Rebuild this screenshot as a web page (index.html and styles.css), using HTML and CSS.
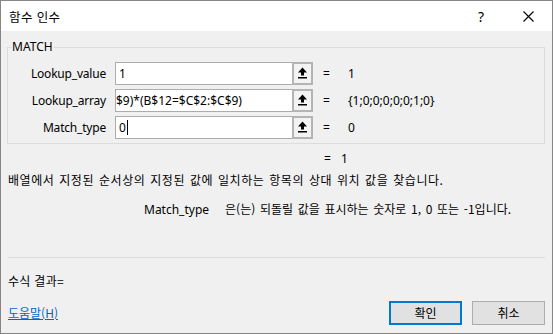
FILE: index.html
```html
<!DOCTYPE html>
<html lang="ko">
<head>
<meta charset="utf-8">
<title>함수 인수</title>
<link rel="stylesheet" href="styles.css">
</head>
<body>
<div class="window">
  <div class="titlebar">
    <span class="title">함수 인수</span>
    <span class="help">?</span>
    <span class="close">
      <svg width="11" height="11" viewBox="0 0 11 11"><path d="M0.5 0.5 L10.5 10.5 M10.5 0.5 L0.5 10.5" stroke="#000" stroke-width="1.1" fill="none"/></svg>
    </span>
  </div>
  <div class="content">
    <fieldset class="group">
      <legend class="legend">MATCH</legend>
      <div class="args">
        <label class="arg-label">Lookup_value</label>
        <div class="field">
          <div class="box"><span class="val">1</span></div>
          <span class="pick"><svg width="11" height="12" viewBox="0 0 11 12"><path d="M5.5 0.5 L10 5.5 H7 V8.5 H4 V5.5 H1 Z" fill="#000"/><rect x="1" y="10" width="9" height="1.5" fill="#000"/></svg></span>
        </div>
        <span class="eq">=</span>
        <span class="res">1</span>

        <label class="arg-label">Lookup_array</label>
        <div class="field">
          <div class="box"><span class="val shifted">$9)*(B$12=$C$2:$C$9)</span></div>
          <span class="pick"><svg width="11" height="12" viewBox="0 0 11 12"><path d="M5.5 0.5 L10 5.5 H7 V8.5 H4 V5.5 H1 Z" fill="#000"/><rect x="1" y="10" width="9" height="1.5" fill="#000"/></svg></span>
        </div>
        <span class="eq">=</span>
        <span class="res">{1;0;0;0;0;0;1;0}</span>

        <label class="arg-label">Match_type</label>
        <div class="field">
          <div class="box"><span class="val">0</span><span class="caret"></span></div>
          <span class="pick"><svg width="11" height="12" viewBox="0 0 11 12"><path d="M5.5 0.5 L10 5.5 H7 V8.5 H4 V5.5 H1 Z" fill="#000"/><rect x="1" y="10" width="9" height="1.5" fill="#000"/></svg></span>
        </div>
        <span class="eq">=</span>
        <span class="res">0</span>
      </div>
    </fieldset>

    <div class="line total"><span class="eq">=</span><span class="res">1</span></div>
    <p class="line desc">배열에서 지정된 순서상의 지정된 값에 일치하는 항목의 상대 위치 값을 찾습니다.</p>
    <p class="line argdesc"><span class="argname">Match_type</span><span class="ko">은(는) 되돌릴 값을 표시하는 숫자로 1, 0 또는 -1입니다.</span></p>

    <div class="sep"></div>
    <p class="line formula">수식 결과=</p>

    <div class="footer">
      <a class="helplink" href="#">도움말(H)</a>
      <div class="buttons">
        <button class="btn primary">확인</button>
        <button class="btn">취소</button>
      </div>
    </div>
  </div>
</div>
</body>
</html>
```
FILE: styles.css
```css
* { box-sizing: border-box; }
html, body {
  margin: 0;
  padding: 0;
  width: 553px;
  height: 334px;
  overflow: hidden;
  background: #f0f0f0;
}
body {
  font-family: "Noto Sans", "Noto Sans CJK KR", sans-serif;
  font-size: 12px;
  line-height: 16px;
  color: #000;
}
.window {
  width: 553px;
  height: 334px;
  border: 1px solid #868686;
  display: flex;
  flex-direction: column;
  background: #f0f0f0;
  overflow: hidden;
}
.titlebar {
  height: 30px;
  background: #fff;
  display: flex;
  align-items: center;
  padding-left: 8px;
  flex: none;
}
.title {
  font-family: "Noto Sans CJK KR", sans-serif;
  font-size: 12.5px;
  letter-spacing: 0.4px;
  flex: 1;
  padding-top: 1px;
}
.help {
  font-size: 14px;
  width: 8px;
  margin-right: 37px;
  padding-top: 1px;
}
.close {
  display: flex;
  margin-right: 18px;
}
.content {
  flex: 1;
  display: flex;
  flex-direction: column;
  padding: 0 7px 8px 6px;
}
.group {
  margin: 8px 0 0 0;
  padding: 7px 0 4px 0;
  border: 1px solid #dcdcdc;
  min-width: 0;
  flex: none;
}
.legend {
  margin-left: 3px;
  padding: 0 1px;
  line-height: 16px;
  height: 16px;
}
.args {
  display: grid;
  grid-template-columns: 98px 198px 17px 1fr;
  grid-auto-rows: 23px;
  column-gap: 9px;
  row-gap: 4px;
  align-items: center;
}
.args .eq { margin-left: 1px; }
.arg-label {
  text-align: right;
  letter-spacing: -0.2px;
}
.field {
  display: flex;
  height: 23px;
}
.box {
  flex: 1;
  background: #fff;
  border: 1px solid #acacac;
  border-right: none;
  display: flex;
  align-items: center;
  padding-left: 3px;
  overflow: hidden;
  white-space: nowrap;
}
.val.shifted { text-indent: -3px; }
.caret {
  width: 1px;
  height: 15px;
  background: #000;
  margin-left: 1px;
}
.pick {
  width: 21px;
  height: 23px;
  border: 2px solid #b4b4b4;
  background: #f3f3f3;
  display: flex;
  align-items: center;
  justify-content: center;
}
.pick svg { margin-top: -1px; }
.eq { display: inline-block; }
.line {
  height: 16px;
  line-height: 16px;
  white-space: nowrap;
  flex: none;
  overflow: visible;
}
.total {
  margin-top: 7px;
  padding-left: 317px;
  display: flex;
}
.total .eq { width: 17px; }
.desc {
  margin: 5px 0 0 1px;
  font-family: "Noto Sans CJK KR", sans-serif;
  letter-spacing: 0.55px;
  word-spacing: 1px;
}
.argdesc {
  margin: 13px 0 0 137px;
}
.argname { margin-right: 16px; }
.ko {
  font-family: "Noto Sans CJK KR", sans-serif;
  word-spacing: 1.3px;
}
.sep {
  margin-top: auto;
  height: 1px;
  background: #dcdcdc;
  margin-left: 1px;
  flex: none;
}
.formula {
  margin: 15px 0 0 1px;
  font-family: "Noto Sans CJK KR", sans-serif;
  letter-spacing: 0.3px;
}
.footer {
  margin-top: 12px;
  display: flex;
  align-items: center;
  justify-content: space-between;
  padding-left: 1px;
  flex: none;
}
.helplink {
  color: #0066cc;
  text-decoration: underline;
  font-family: "Noto Sans CJK KR", sans-serif;
}
.buttons {
  display: flex;
  gap: 10px;
}
.btn {
  width: 73px;
  height: 24px;
  background: #e1e1e1;
  border: 1px solid #adadad;
  font-family: "Noto Sans CJK KR", sans-serif;
  font-size: 12px;
  line-height: 16px;
  color: #000;
  padding: 0;
}
.btn.primary {
  border: 2px solid #0078d7;
}
```
